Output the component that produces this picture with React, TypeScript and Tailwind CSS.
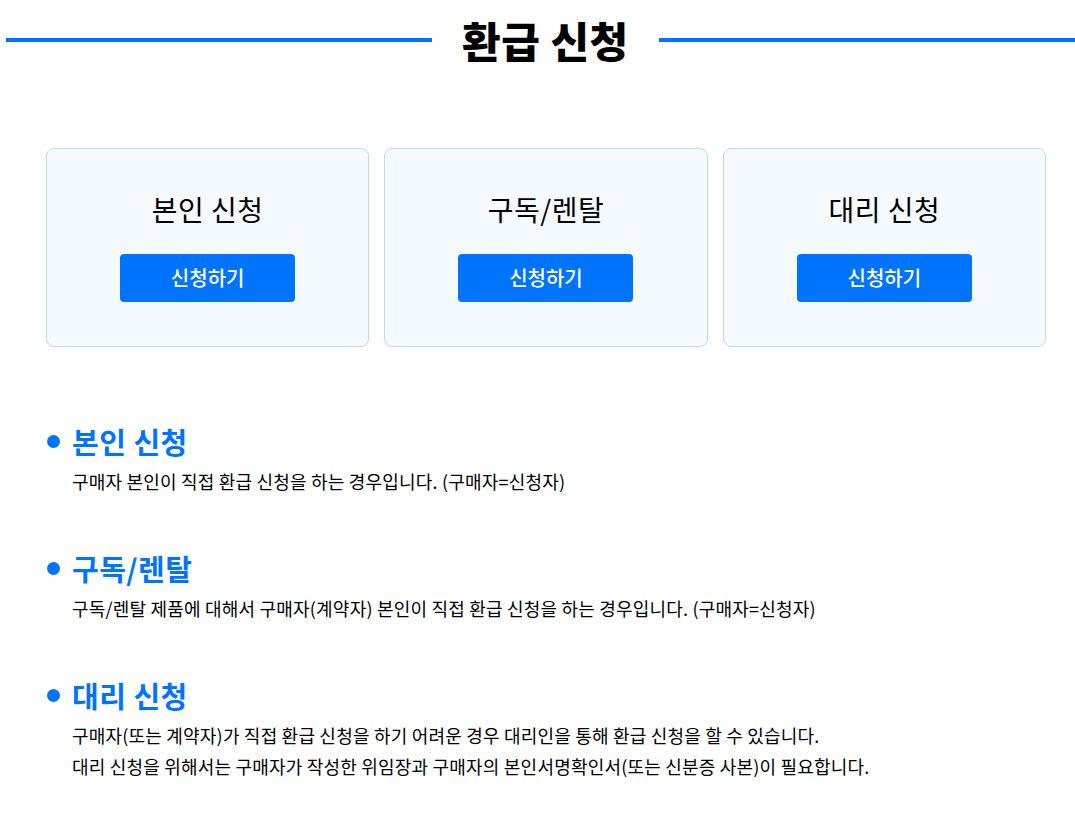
import React from "react";

const cards = ["본인 신청", "구독/렌탈", "대리 신청"];

const sections: { title: string; lines: string[] }[] = [
  {
    title: "본인 신청",
    lines: ["구매자 본인이 직접 환급 신청을 하는 경우입니다. (구매자=신청자)"],
  },
  {
    title: "구독/렌탈",
    lines: [
      "구독/렌탈 제품에 대해서 구매자(계약자) 본인이 직접 환급 신청을 하는 경우입니다. (구매자=신청자)",
    ],
  },
  {
    title: "대리 신청",
    lines: [
      "구매자(또는 계약자)가 직접 환급 신청을 하기 어려운 경우 대리인을 통해 환급 신청을 할 수 있습니다.",
      "대리 신청을 위해서는 구매자가 작성한 위임장과 구매자의 본인서명확인서(또는 신분증 사본)이 필요합니다.",
    ],
  },
];

export default function App() {
  return (
    <div
      className="min-h-screen w-[1075px] bg-white text-black"
      style={{ fontFamily: '"Noto Sans CJK KR", "Noto Sans", sans-serif' }}
    >
      {/* page title with rules on both sides */}
      <div className="flex items-center pl-[6px] pt-[15px]">
        <div className="h-[4.5px] w-[426px] bg-[#0073ff]" />
        <h1 className="mx-[30px] text-[42px] font-black leading-[50px] tracking-[0.5px]">
          환급 신청
        </h1>
        <div className="h-[4.5px] flex-1 bg-[#0073ff]" />
      </div>

      {/* option cards */}
      <div className="mt-[83px] grid w-[1000px] grid-cols-3 gap-[15px] pl-[46px] box-content">
        {cards.map((c) => (
          <div
            key={c}
            className="flex h-[199px] flex-col items-center rounded-[8px] border border-[#bcd8fc] bg-[#f5faff] pt-[41px]"
          >
            <div className="text-[28px] leading-[39px] tracking-[0.5px]">{c}</div>
            <button className="mt-[25px] h-[48px] w-[175px] rounded-[4px] bg-[#0073ff] text-[20px] font-medium text-white">
              신청하기
            </button>
          </div>
        ))}
      </div>

      {/* descriptions */}
      <div className="mt-[74px] flex flex-col gap-[51px] pl-[47px]">
        {sections.map((s) => (
          <div key={s.title}>
            <div className="flex items-center">
              <span className="mr-[12px] h-[13px] w-[13px] rounded-full bg-[#0073ff]" />
              <h2 className="text-[29px] font-bold leading-[40px] tracking-[0.5px] text-[#0073ff]">
                {s.title}
              </h2>
            </div>
            <div className="mt-[5px] pl-[25px] text-[18px] leading-[31px] tracking-[0.2px]">
              {s.lines.map((l) => (
                <p key={l}>{l}</p>
              ))}
            </div>
          </div>
        ))}
      </div>
    </div>
  );
}
